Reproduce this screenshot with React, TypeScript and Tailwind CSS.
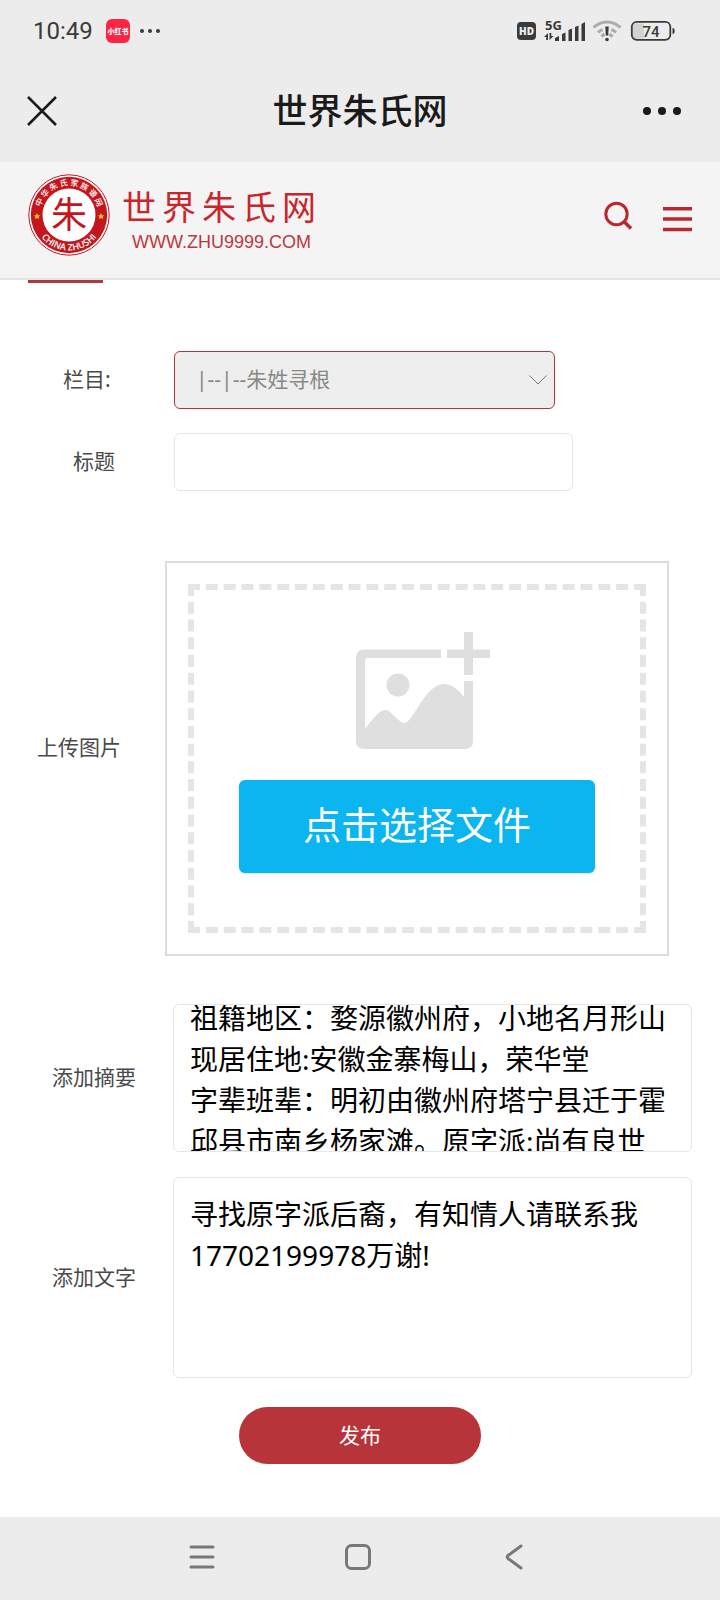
import { useEffect, useRef } from "react";

const SUMMARY =
  "祖籍地区：婺源徽州府，小地名月形山\n现居住地:安徽金寨梅山，荣华堂\n字辈班辈：明初由徽州府塔宁县迁于霍邱县市南乡杨家滩。原字派:尚有良世";

const CONTENT = "寻找原字派后裔，有知情人请联系我17702199978万谢!";

const StatusBar = () => {
  return (
    <div className="flex h-[62px] items-center justify-between pl-[33px] pr-[45px] text-[#3a3a3a]">
      <div className="flex items-center">
        <span className="w-[60px] font-[Roboto,sans-serif] text-2xl">10:49</span>
        <span className="ml-[13px] flex h-6 w-6 items-center justify-center rounded-md bg-[#fe2442]">
          <svg viewBox="0 0 24 24" className="h-6 w-6" fill="#fff">
            <text x="12" y="15" textAnchor="middle" fontSize="7" fontWeight="900" fontFamily="'Noto Sans CJK SC', sans-serif">小红书</text>
          </svg>
        </span>
        <svg viewBox="0 0 20 6" className="ml-[10px] h-[6px] w-5" fill="currentColor">
          <circle cx="2" cy="3" r="2" />
          <circle cx="10" cy="3" r="2" />
          <circle cx="18" cy="3" r="2" />
        </svg>
      </div>
      <svg viewBox="0 -4 158 32" className="h-8 w-[158px]" fill="currentColor" fontFamily="'Open Sans', sans-serif">
        {/* HD */}
        <rect x="0" y="3" width="19" height="18" rx="4" />
        <text x="9.500" y="15.600" textAnchor="middle" fontSize="10" fontWeight="800" fill="#ececec">HD</text>
        {/* 5G + signal */}
        <text x="28" y="11" fontSize="13" fontWeight="700">5G</text>
        <path d="M27 18l4-4v7h-1.800v-3zM32.500 14h1.800v3h2.400l-4.200 4z" />
        <path d="M38 22v-3l4-2v5zM45 22v-7l3.500-1.500V22zM51.500 22V11l3.500-1.500V22zM58 22V8l3.500-1.500V22zM64.500 22V5L68 3v19z" />
        {/* wifi */}
        <g fill="none" stroke="#ababab" strokeWidth="3">
          <path d="M76.500 8.500c8-7.500 19-7.500 27 0" />
          <path d="M81 13.500q2-2 4.500-3M94.500 10.500q2.500 1 4.500 3" />
          <path d="M84.500 17.500l3-2.500M92.500 15l3 2.500" />
        </g>
        <path d="M88.300 7.500h3.400l-.5 9h-2.400z" />
        <circle cx="90" cy="20.500" r="1.800" />
        {/* battery */}
        <path d="M118 4.500h9v15h-9q-2.500 0-2.500-3v-9q0-3 2.500-3z" fill="#d2d2d2" />
        <rect x="114.800" y="2.800" width="38.500" height="18" rx="5" fill="none" stroke="currentColor" strokeWidth="1.800" />
        <path d="M155.500 9q2.200 0 2.200 3t-2.200 3z" />
        <text x="134" y="17.500" textAnchor="middle" fontSize="15" fontWeight="500" fontFamily="Roboto, sans-serif">74</text>
      </svg>
    </div>
  );
};

const TitleBar = () => {
  return (
    <div className="flex h-[100px] items-start justify-between px-[27px] pt-[34px] text-[#1a1a1a]">
      <button aria-label="关闭" className="w-14">
        <svg viewBox="0 0 30 30" className="h-[30px] w-[30px]" fill="none" stroke="currentColor" strokeWidth="2.500">
          <path d="M1 1l28 28M29 1L1 29" />
        </svg>
      </button>
      <h1 className="text-[35px] font-medium leading-[30px]">世界朱氏网</h1>
      <button aria-label="更多" className="flex w-14 justify-end pr-3 pt-[11px]">
        <svg viewBox="0 0 38 8" className="h-2 w-[38px]" fill="currentColor">
          <circle cx="4" cy="4" r="4" />
          <circle cx="19" cy="4" r="4" />
          <circle cx="34" cy="4" r="4" />
        </svg>
      </button>
    </div>
  );
};

const Seal = () => {
  return (
    <svg viewBox="0 0 82 82" className="h-[82px] w-[82px]">
      <defs>
        <path id="arc-top" d="M11.500 41a29.500 29.500 0 0 1 59 0" />
        <path id="arc-bottom" d="M5.500 41a35.500 35.500 0 0 0 71 0" />
      </defs>
      <circle cx="41" cy="41" r="40.200" fill="#fff" stroke="#c5161d" strokeWidth="1" />
      <circle cx="41" cy="41" r="38.200" fill="#c5161d" />
      <circle cx="41" cy="41" r="26.500" fill="#fff" />
      <text fontSize="8" fill="#fff" fontWeight="500" fontFamily="'Noto Sans CJK SC', sans-serif">
        <textPath href="#arc-top" startOffset="50%" textAnchor="middle">中 华 朱 氏 家 族 谱 网</textPath>
      </text>
      <text fontSize="9" fill="#fff" fontWeight="600" fontFamily="'Open Sans', sans-serif">
        <textPath href="#arc-bottom" startOffset="50%" textAnchor="middle">CHINA ZHUSHI</textPath>
      </text>
      <g fill="#f4c430">
        <path id="star" d="M9 39l1 2.200 2.200.2-1.700 1.600.6 2.300L9 44l-2.100 1.300.6-2.300-1.700-1.600 2.200-.2z" />
        <use href="#star" x="64" />
      </g>
      <text x="41" y="54" textAnchor="middle" fontSize="36" fill="#c5161d" fontFamily="'Noto Sans CJK SC', sans-serif">朱</text>
    </svg>
  );
};

const SiteHeader = () => {
  return (
    <header className="flex h-[118px] justify-between border-b-2 border-[#e3e3e3] bg-[#f4f4f4] px-7 pt-3">
      <a href="#" className="flex items-start text-[#c9252c]">
        <Seal />
        <span className="ml-3 flex flex-col pt-[15px]">
          <span className="flex gap-[6px] font-['Noto_Sans_CJK_SC',sans-serif] text-[34px] leading-[34px]">
            <span>世</span>
            <span>界</span>
            <span>朱</span>
            <span>氏</span>
            <span>网</span>
          </span>
          <span className="pl-[10px] pt-[9px] font-['Liberation_Sans',sans-serif] text-[18px] leading-5 text-[#bb3a40]">WWW.ZHU9999.COM</span>
        </span>
      </a>
      <div className="flex items-start gap-[30px] pt-[26px] text-[#b8282e]">
        <button aria-label="搜索">
          <svg viewBox="0 0 30 30" className="h-[30px] w-[30px]" fill="none" stroke="currentColor">
            <circle cx="13.500" cy="14" r="10.700" strokeWidth="3" />
            <path d="M21 21.500l7 7" strokeWidth="3.500" />
          </svg>
        </button>
        <button aria-label="菜单" className="pt-[6px]">
          <svg viewBox="0 0 29 26" className="h-[26px] w-[29px]" fill="currentColor">
            <path d="M0 1h29v3.500H0zM0 11.300h29v3.500H0zM0 21.700h29v3.500H0z" />
          </svg>
        </button>
      </div>
    </header>
  );
};

const UploadBox = () => {
  return (
    <div className="mr-[51px] flex-1 border-2 border-[#dcdcdc] p-[21px]">
      <div className="flex h-[349px] flex-col items-center border-[6px] border-dashed border-[#e5e5e5] px-[45px] pt-[42px]">
        <svg viewBox="0 0 134 118" className="ml-3 h-[118px] w-[134px]" fill="#dfdfdf">
          <path d="M108 0h9v17.500h17v8.500h-17v17h-9V26H91v-8.500h17z" />
          <path d="M8 17.500h77V26H12q-3 0-3 3v68c9-12 15-19 20.500-19S43 91 48.500 91C57 91 69 52 88 52c8 0 15 6 20 13V49h9v60q0 8-8 8H8q-8 0-8-8V26q0-8.500 8-8.500z" />
          <circle cx="42" cy="53" r="11.500" />
        </svg>
        <button type="button" className="mt-[30px] h-[93px] w-full rounded-md bg-[#0bb5ef] pb-1 text-[38px] text-white shadow-sm">点击选择文件</button>
      </div>
    </div>
  );
};

const PostForm = () => {
  const summary = useRef<HTMLTextAreaElement>(null);

  useEffect(() => {
    if (summary.current) summary.current.scrollTop = 23;
  }, []);

  return (
    <form className="flex flex-col text-[21px] text-[#4a4a4a]" onSubmit={(e) => e.preventDefault()}>
      <div className="flex items-center pt-[68px]">
        <label htmlFor="column" className="w-[174px] pl-[63px]">栏目:</label>
        <div className="mr-[165px] grid flex-1 items-center">
          <select id="column" className="col-start-1 row-start-1 h-[58px] w-full appearance-none rounded-md border border-[#b4363c] bg-[#eee] pl-[21px] text-[21px] text-[#888]">
            <option>|--|--朱姓寻根</option>
          </select>
          <svg viewBox="0 0 18 10" className="pointer-events-none col-start-1 row-start-1 mr-2 h-[10px] w-[18px] justify-self-end" fill="none" stroke="#777">
            <path d="M.5.5l8.500 8.500 8.500-8.500" />
          </svg>
        </div>
      </div>

      <div className="flex items-center pt-6">
        <label htmlFor="title" className="w-[174px] pl-[73px]">标题</label>
        <input id="title" type="text" className="mr-[147px] h-[58px] min-w-0 flex-1 rounded-md border border-[#e6e6e6] px-4" />
      </div>

      <div className="flex items-center pt-[70px]">
        <span className="w-[165px] pb-[22px] pl-[37px]">上传图片</span>
        <UploadBox />
      </div>

      <div className="flex items-center pt-12">
        <label htmlFor="summary" className="w-[173px] pl-[52px]">添加摘要</label>
        <textarea
          id="summary"
          ref={summary}
          defaultValue={SUMMARY}
          className="mr-7 h-[148px] min-w-0 flex-1 resize-none rounded-md border border-[#e6e6e6] p-4 pr-2 text-[28px] leading-[41px] text-black [scrollbar-width:none]"
        />
      </div>

      <div className="flex items-center pt-[25px]">
        <label htmlFor="content" className="w-[173px] pl-[52px]">添加文字</label>
        <textarea
          id="content"
          defaultValue={CONTENT}
          className="mr-7 h-[201px] min-w-0 flex-1 resize-none rounded-md border border-[#e6e6e6] p-4 text-[28px] leading-[41px] text-black [scrollbar-width:none]"
        />
      </div>

      <button type="submit" className="mt-[29px] h-[57px] w-[242px] self-center rounded-full bg-[#b7353a] text-[21px] text-white">发布</button>
    </form>
  );
};

const NavBar = () => {
  return (
    <nav className="mt-auto flex h-[83px] items-center justify-center gap-[130px] bg-[#ececec] pb-1 pr-1 text-[#787878]">
      <button aria-label="最近任务">
        <svg viewBox="0 0 26 26" className="h-[26px] w-[26px]" fill="none" stroke="currentColor" strokeWidth="3" strokeLinecap="round">
          <path d="M2 3h22M2 13h22M2 23h22" />
        </svg>
      </button>
      <button aria-label="主屏幕">
        <svg viewBox="0 0 26 26" className="h-[26px] w-[26px]" fill="none" stroke="currentColor" strokeWidth="3">
          <rect x="1.500" y="1.500" width="23" height="23" rx="5" />
        </svg>
      </button>
      <button aria-label="返回">
        <svg viewBox="0 0 26 26" className="h-[26px] w-[26px]" fill="none" stroke="currentColor" strokeWidth="3" strokeLinecap="round">
          <path d="M20 2L7 11.500q-1.500 1.500 0 3L20 24" />
        </svg>
      </button>
    </nav>
  );
};

const App = () => {
  return (
    <div className="flex min-h-screen flex-col bg-white font-['Noto_Sans','Noto_Sans_CJK_SC',sans-serif]">
      <div className="bg-[#ececec]">
        <StatusBar />
        <TitleBar />
      </div>
      <SiteHeader />
      <div className="ml-7 h-[3px] w-[75px] bg-[#ae3a40]" />
      <PostForm />
      <NavBar />
    </div>
  );
};

export default App;
